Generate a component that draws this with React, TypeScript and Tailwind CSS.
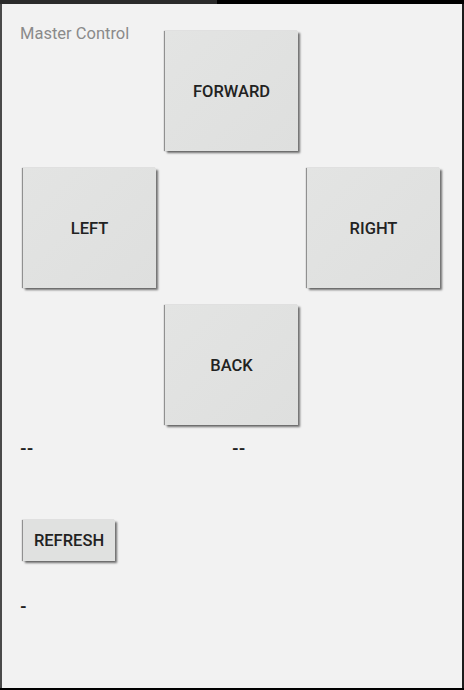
import React from "react";

const font = { fontFamily: "Roboto, 'Noto Sans', sans-serif" };

function PadButton({ label, className = "" }: { label: string; className?: string }) {
  return (
    <button
      className={`w-[133px] h-[120px] pt-[2px] bg-[linear-gradient(135deg,#e3e4e3,#dedfde)] text-[16.5px] leading-[20px] font-medium text-[#222] shadow-[-1px_0_1px_rgba(0,0,0,0.4),2px_2px_2px_rgba(0,0,0,0.55)] ${className}`}
    >
      {label}
    </button>
  );
}

export default function App() {
  return (
    <div className="w-[464px] h-[690px] flex flex-col bg-black overflow-hidden" style={font}>
      {/* status bar edge */}
      <div className="h-[4px] flex">
        <div className="w-[217px] bg-[#2b2b2b]" />
        <div className="flex-1 bg-black" />
      </div>

      <div className="flex-1 mb-[2px] border-l-2 border-l-[#4a4a4a] border-r-2 border-r-[#1c1c1c] bg-[#f2f2f2] pl-[18px] pt-[19px]">
        {/* Direction pad */}
        <div className="grid grid-cols-[133px_133px_133px] gap-x-[9px] gap-y-[17px] pl-[3px] items-start">
          <div className="-ml-[3px] pt-[1px] text-[16.5px] leading-[20px] text-[#8a8a8a]">Master Control</div>
          <PadButton label="FORWARD" className="mt-[8px]" />
          <div />
          <PadButton label="LEFT" />
          <div />
          <PadButton label="RIGHT" />
          <div />
          <PadButton label="BACK" />
          <div />
        </div>

        {/* Sensor readings */}
        <div className="flex w-[424px] mt-[13px] text-[17px] leading-[20px] font-bold text-[#222]">
          <div className="w-1/2">--</div>
          <div className="w-1/2">--</div>
        </div>

        <button className="ml-[3px] mt-[62px] w-[92px] h-[41px] pt-[1px] bg-[#e0e1e0] text-[16.5px] leading-[20px] font-medium text-[#222] shadow-[-1px_0_1px_rgba(0,0,0,0.4),2px_2px_2px_rgba(0,0,0,0.55)]">
          REFRESH
        </button>

        <div className="mt-[35px] text-[17px] leading-[20px] font-bold text-[#222]">-</div>
      </div>
    </div>
  );
}
